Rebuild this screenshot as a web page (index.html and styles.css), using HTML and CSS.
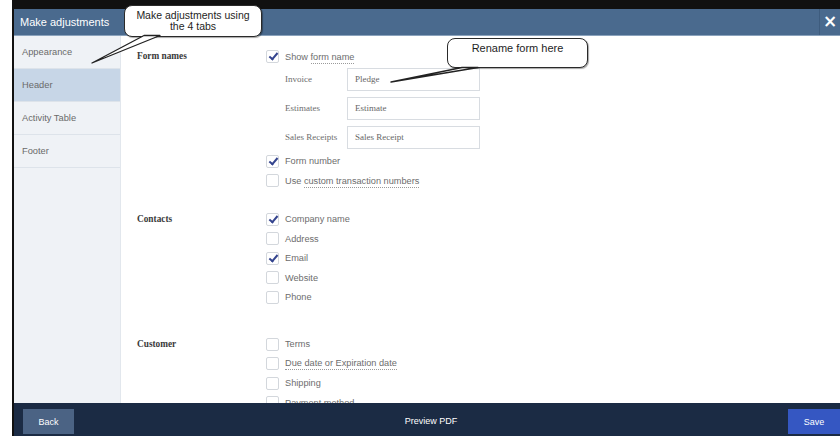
FILE: index.html
```html
<!DOCTYPE html>
<html lang="en">
<head>
<meta charset="utf-8">
<title>Make adjustments</title>
<link rel="stylesheet" href="styles.css">
</head>
<body>
<div class="page">
  <div class="window">
    <header class="titlebar">
      <h1 class="title">Make adjustments</h1>
      <button class="close" type="button">&times;</button>
    </header>

    <div class="body">
      <nav class="tabs">
        <div class="tab">Appearance</div>
        <div class="tab tab-active">Header</div>
        <div class="tab">Activity Table</div>
        <div class="tab">Footer</div>
      </nav>

      <main class="content">
        <section class="section">
          <div class="section-label">Form names</div>
          <div class="section-body">
            <label class="check-row"><span class="box checked"></span><span>Show <span class="hint">form name</span></span></label>
            <div class="fields">
              <div class="field"><span class="field-label">Invoice</span><span class="input">Pledge</span></div>
              <div class="field"><span class="field-label">Estimates</span><span class="input">Estimate</span></div>
              <div class="field"><span class="field-label">Sales Receipts</span><span class="input">Sales Receipt</span></div>
            </div>
            <label class="check-row"><span class="box checked"></span><span>Form number</span></label>
            <label class="check-row"><span class="box"></span><span>Use <span class="hint">custom transaction numbers</span></span></label>
          </div>
        </section>

        <section class="section section-contacts">
          <div class="section-label">Contacts</div>
          <div class="section-body">
            <label class="check-row"><span class="box checked"></span><span>Company name</span></label>
            <label class="check-row"><span class="box"></span><span>Address</span></label>
            <label class="check-row"><span class="box checked"></span><span>Email</span></label>
            <label class="check-row"><span class="box"></span><span>Website</span></label>
            <label class="check-row"><span class="box"></span><span>Phone</span></label>
          </div>
        </section>

        <section class="section section-customer">
          <div class="section-label">Customer</div>
          <div class="section-body">
            <label class="check-row"><span class="box"></span><span>Terms</span></label>
            <label class="check-row"><span class="box"></span><span class="hint">Due date or Expiration date</span></label>
            <label class="check-row"><span class="box"></span><span>Shipping</span></label>
            <label class="check-row"><span class="box"></span><span>Payment method</span></label>
          </div>
        </section>
      </main>
    </div>

    <footer class="actions">
      <button class="btn btn-back" type="button">Back</button>
      <span class="preview">Preview PDF</span>
      <button class="btn btn-save" type="button">Save</button>
    </footer>
  </div>

  <!-- annotation balloons laid over the dialog -->
  <div class="callout callout-tabs">Make adjustments using<br>the 4 tabs</div>
  <div class="callout callout-rename">Rename form here</div>
  <svg class="tails" width="840" height="436" viewBox="0 0 840 436">
    <polygon points="144,35.5 92,63 160,35.5" />
    <polygon points="462,67.5 391,82 478,67.5" />
  </svg>
</div>
</body>
</html>
```

FILE: styles.css
```css
html, body {
  margin: 0;
  height: 100%;
  background: #fff;
  overflow: hidden;
}

.page {
  position: relative;
  width: 840px;
  height: 436px;
  padding-left: 12px;
  box-sizing: border-box;
  font-family: "Liberation Sans", Arial, sans-serif;
}

.window {
  height: 100%;
  border-left: 2px solid #111;
  border-top: 9px solid #111;
  box-sizing: border-box;
  display: flex;
  flex-direction: column;
}

/* title bar */
.titlebar {
  height: 26px;
  flex: none;
  display: flex;
  align-items: center;
  background: #4a6a8e;
  border-bottom: 1px solid #8aa2bc;
}

.title {
  flex: 1;
  margin: 0;
  padding-left: 6px;
  font-size: 11px;
  font-weight: normal;
  color: #fff;
}

.close {
  align-self: stretch;
  width: 21px;
  border: 0;
  border-left: 1px solid #3e5c7e;
  background: #4a6a8e;
  color: #fff;
  font-family: "DejaVu Sans", sans-serif;
  font-size: 17px;
  font-weight: bold;
  line-height: 1;
  padding: 0 0 2px;
  display: flex;
  align-items: center;
  justify-content: center;
}

/* body: side tabs + settings */
.body {
  flex: 1;
  min-height: 0;
  display: flex;
}

.tabs {
  width: 106px;
  flex: none;
  background: #eff2f6;
  border-right: 1px solid #e2e7ed;
}

.tab {
  height: 32px;
  border-bottom: 1px solid #dde3ea;
  padding-left: 8px;
  display: flex;
  align-items: center;
  font-size: 9.3px;
  color: #6a6a6a;
}

.tab-active {
  background: #c7d6e7;
}

.content {
  flex: 1;
  overflow: hidden;
  padding: 11px 0 0 16px;
}

.section {
  display: grid;
  grid-template-columns: 128px 1fr;
}

.section-contacts {
  margin-top: 19px;
}

.section-customer {
  margin-top: 27.5px;
}

.section-label {
  font-family: "Liberation Serif", "Times New Roman", serif;
  font-weight: bold;
  font-size: 9.3px;
  color: #3a3a3a;
  line-height: 19.5px;
}

.check-row {
  height: 19.5px;
  display: flex;
  align-items: center;
  gap: 6px;
  padding-left: 1px;
  font-size: 9.2px;
  color: #6d6d6d;
}

.hint {
  border-bottom: 1px dotted #9a9a9a;
  padding-bottom: 1px;
}

.box {
  position: relative;
  width: 11px;
  height: 11px;
  border: 1px solid #d3d7dc;
  border-radius: 2px;
  background: #fff;
  flex: none;
}

.box.checked::after {
  content: "";
  position: absolute;
  left: 3.5px;
  top: 0;
  width: 3px;
  height: 7px;
  border-right: 2.2px solid #34448e;
  border-bottom: 2.2px solid #34448e;
  transform: rotate(40deg);
}

.fields {
  display: flex;
  flex-direction: column;
  gap: 6px;
  margin: 1px 0 3px 20px;
}

.field {
  height: 23px;
  display: flex;
  align-items: center;
}

.field-label {
  width: 62px;
  font-family: "Liberation Serif", "Times New Roman", serif;
  font-size: 9px;
  color: #6d6d6d;
}

.input {
  width: 133px;
  height: 23px;
  box-sizing: border-box;
  border: 1px solid #d8dce1;
  padding-left: 7px;
  display: flex;
  align-items: center;
  font-family: "Liberation Serif", "Times New Roman", serif;
  font-size: 9px;
  color: #666;
  background: #fff;
}

/* footer actions */
.actions {
  height: 33px;
  flex: none;
  background: #1b2b44;
  display: flex;
  align-items: flex-start;
  padding: 6px 0 0 9px;
  box-sizing: border-box;
}

.btn {
  height: 25px;
  border: 0;
  padding: 0;
  color: #fff;
  font-family: "Liberation Sans", Arial, sans-serif;
  font-size: 9px;
}

.btn-back {
  width: 51px;
  background: #4b6384;
}

.btn-save {
  width: 52px;
  background: #3557c2;
}

.preview {
  flex: 1;
  text-align: center;
  line-height: 25px;
  font-size: 9px;
  color: #fff;
}

/* annotation balloons */
.callout {
  position: absolute;
  box-sizing: border-box;
  background: #fff;
  border: 1.5px solid #2a2a2a;
  border-radius: 8px;
  box-shadow: 1px 1px 1px rgba(0, 0, 0, 0.35);
  color: #1e1e1e;
  text-align: center;
}

.callout-tabs {
  left: 124px;
  top: 5px;
  width: 138px;
  height: 32px;
  font-size: 10.5px;
  line-height: 11px;
  padding-top: 4px;
}

.callout-rename {
  left: 447px;
  top: 38px;
  width: 141px;
  height: 30px;
  font-size: 11px;
  line-height: 13px;
  padding-top: 3px;
}

.tails {
  position: absolute;
  left: 0;
  top: 0;
  pointer-events: none;
}

.tails polygon {
  fill: #fff;
  stroke: #222;
  stroke-width: 1.3;
  stroke-linejoin: round;
}
```
